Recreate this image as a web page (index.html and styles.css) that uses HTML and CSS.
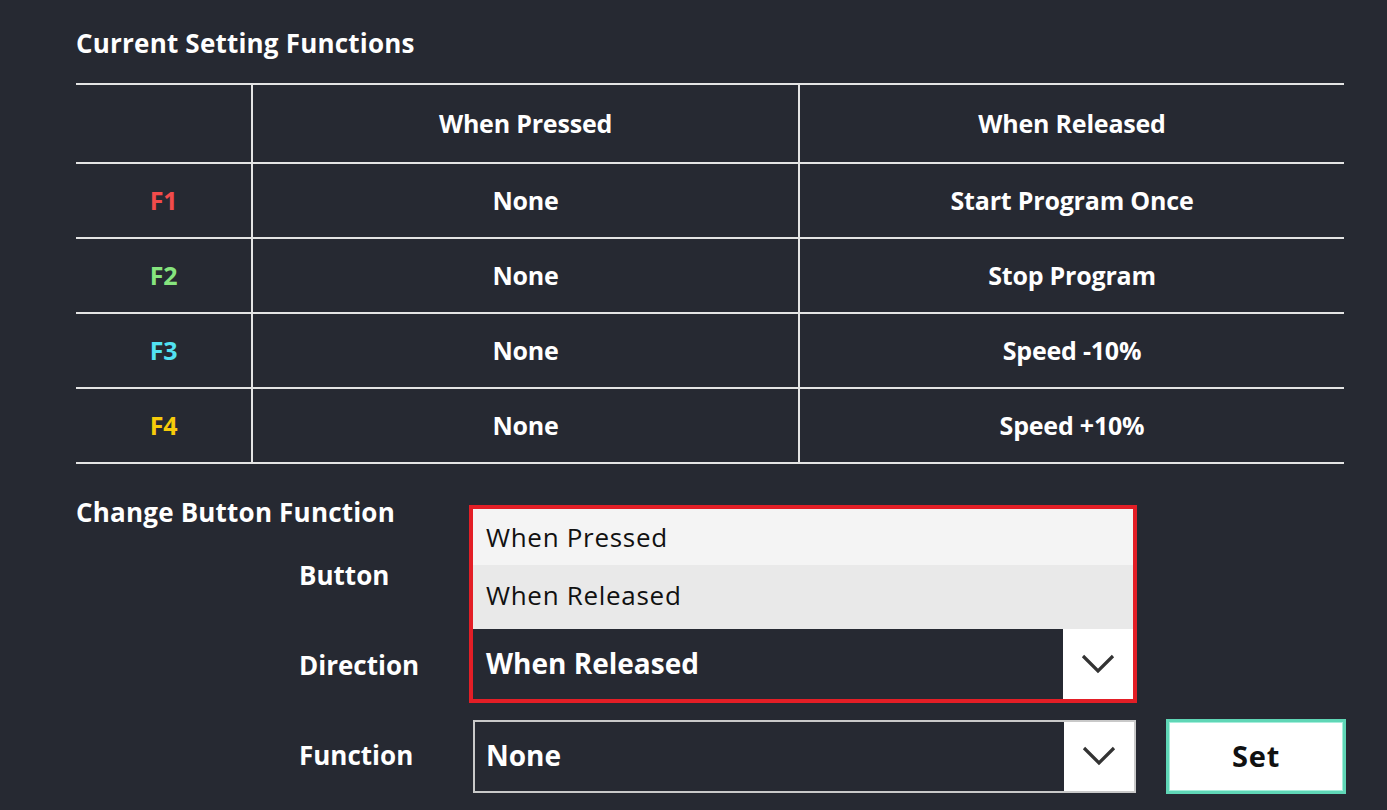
FILE: index.html
```html
<!DOCTYPE html>
<html lang="en">
<head>
<meta charset="utf-8">
<title>Button Functions</title>
<link rel="stylesheet" href="styles.css">
</head>
<body>
<div class="page">
  <h1 class="title">Current Setting Functions</h1>
  <div class="table">
    <div class="cell head"></div>
    <div class="cell head">When Pressed</div>
    <div class="cell head last">When Released</div>

    <div class="cell key f1">F1</div>
    <div class="cell">None</div>
    <div class="cell last">Start Program Once</div>

    <div class="cell key f2">F2</div>
    <div class="cell">None</div>
    <div class="cell last">Stop Program</div>

    <div class="cell key f3">F3</div>
    <div class="cell">None</div>
    <div class="cell last">Speed -10%</div>

    <div class="cell key f4">F4</div>
    <div class="cell">None</div>
    <div class="cell last">Speed +10%</div>
  </div>

  <h2 class="title sub">Change Button Function</h2>
  <div class="form">
    <div class="label">Button</div>
    <div class="control">
      <div class="select plain">
        <span class="value"></span>
        <span class="arrow"><svg width="34" height="20" viewBox="0 0 34 20"><path d="M2 2 L17 17 L32 2" fill="none" stroke="#333" stroke-width="3.2"/></svg></span>
      </div>
    </div>
    <div></div>

    <div class="label">Direction</div>
    <div class="control">
      <div class="dir-wrap">
        <div class="menu">
          <div class="option first">When Pressed</div>
          <div class="option second">When Released</div>
        </div>
        <div class="select open">
          <span class="value">When Released</span>
          <span class="arrow"><svg width="34" height="20" viewBox="0 0 34 20"><path d="M2 2 L17 17 L32 2" fill="none" stroke="#333" stroke-width="3.2"/></svg></span>
        </div>
      </div>
    </div>
    <div></div>

    <div class="label">Function</div>
    <div class="control">
      <div class="select plain">
        <span class="value">None</span>
        <span class="arrow"><svg width="34" height="20" viewBox="0 0 34 20"><path d="M2 2 L17 17 L32 2" fill="none" stroke="#333" stroke-width="3.2"/></svg></span>
      </div>
    </div>
    <button class="set">Set</button>
  </div>
</div>
</body>
</html>
```

FILE: styles.css
```css
html, body {
  margin: 0;
  padding: 0;
  background: #262932;
  color: #ffffff;
  font-family: "Open Sans", "Noto Sans", sans-serif;
}

.page {
  width: 1268px;
  padding: 27px 0 0 76px;
}

.title {
  margin: 0 0 24px 0;
  font-size: 26px;
  line-height: 32px;
  font-weight: 700;
  letter-spacing: 0.2px;
}

.table {
  display: grid;
  grid-template-columns: 177px 547px 544px;
  grid-auto-rows: 75px;
  grid-template-rows: 79px;
  border-top: 2px solid #e4e4e4;
}

.cell {
  display: flex;
  align-items: center;
  justify-content: center;
  padding-bottom: 2px;
  border-bottom: 2px solid #e4e4e4;
  border-right: 2px solid #e4e4e4;
  font-size: 25px;
  font-weight: 700;
  letter-spacing: -0.2px;
}

.cell.last {
  border-right: none;
}

.f1 { color: #f24b4b; }
.f2 { color: #86e47e; }
.f3 { color: #52e2f2; }
.f4 { color: #f7cb0a; }

.sub {
  margin-top: 32px;
  margin-bottom: 3px;
}

.form {
  display: grid;
  grid-template-columns: 170px 668px 209px;
  grid-auto-rows: 90px;
  align-items: center;
  margin-left: 223px;
}

.label {
  font-size: 26px;
  font-weight: 700;
  letter-spacing: 0;
  padding-bottom: 2px;
}

.control {
  position: relative;
}

.select {
  display: flex;
  align-items: stretch;
  background: #262932;
  box-sizing: border-box;
}

.select .value {
  flex: 1;
  display: flex;
  align-items: center;
  padding-left: 13px;
  padding-bottom: 2px;
  font-size: 28px;
  font-weight: 700;
  letter-spacing: 0;
  color: #ffffff;
}

.select .arrow {
  width: 70px;
  background: #ffffff;
  display: flex;
  align-items: center;
  justify-content: center;
}

.select.plain {
  margin-left: 4px;
  width: 663px;
  height: 73px;
  border: 2px solid #c9c9c9;
}

.select.plain .value {
  padding-left: 11px;
}

.select.open {
  height: 70px;
}

.dir-wrap {
  position: relative;
  border: 4px solid #e31e26;
  border-top: none;
}

.menu {
  position: absolute;
  left: -4px;
  right: -4px;
  bottom: 100%;
  border: 4px solid #e31e26;
  border-bottom: none;
  z-index: 2;
}

.option {
  display: flex;
  align-items: center;
  padding-left: 13px;
  color: #111111;
  font-size: 26px;
  font-weight: 400;
  letter-spacing: 0.7px;
}

.option.first {
  height: 56px;
  background: #f4f4f4;
}

.option.second {
  height: 64px;
  background: #e9e9e9;
  padding-bottom: 4px;
  box-sizing: border-box;
}

.set {
  justify-self: end;
  width: 180px;
  height: 75px;
  background: #ffffff;
  border: 3px solid #5fd6b6;
  box-shadow: inset 0 0 0 1px #a6eedb;
  font-family: "Open Sans", "Noto Sans", sans-serif;
  font-size: 29px;
  font-weight: 700;
  letter-spacing: 0.8px;
  color: #111111;
  padding: 0 0 2px 0;
}
```
